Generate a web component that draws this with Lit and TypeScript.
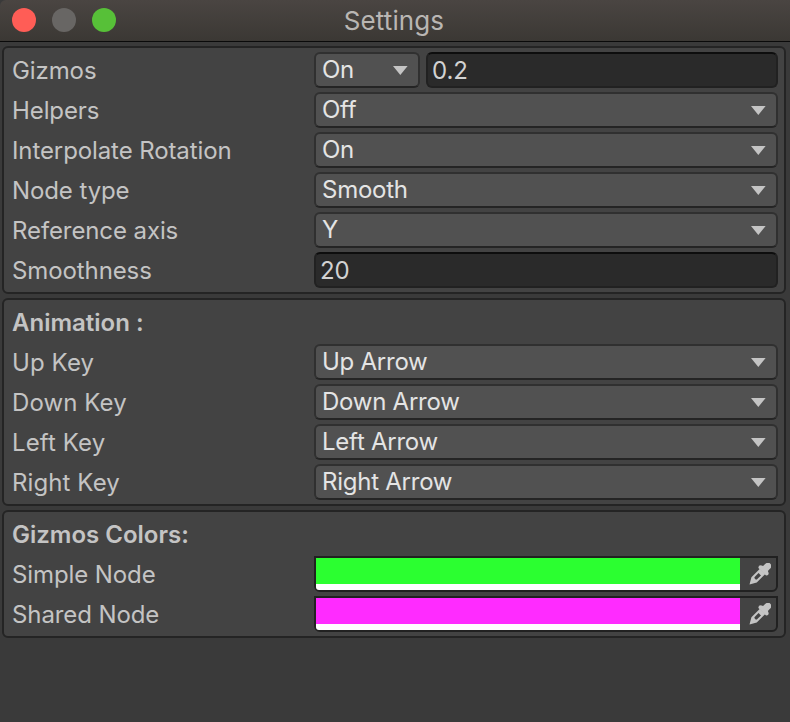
import { LitElement, html, css, svg } from "lit";
import { customElement, property } from "lit/decorators.js";
import { styleMap } from "lit/directives/style-map.js";

@customElement("popup-field")
class PopupField extends LitElement {
  @property() value = "";
  static styles = css`
    :host {
      box-sizing: border-box;
      display: flex;
      align-items: center;
      justify-content: space-between;
      height: 36px;
      padding: 0 10px 0 6px;
      border: 2px solid #303030;
      border-bottom-color: #242424;
      border-radius: 6px;
      background: #515151;
      color: #e4e4e4;
      letter-spacing: -.25px;
    }
    .value { line-height: 32px; white-space: pre; }
    .arrow { display: block; margin-top: 1px; }
  `;
  render() {
    return html`<span class="value">${this.value}</span>
      <svg class="arrow" width="15" height="9" viewBox="0 0 15 9">
        <path d="M0 0H14.6L7.3 9Z" fill="#c4c4c4" />
      </svg>`;
  }
}

@customElement("number-field")
class NumberField extends LitElement {
  @property() value = "";
  static styles = css`
    :host {
      box-sizing: border-box;
      display: block;
      height: 36px;
      padding: 0 4px;
      border: 2px solid #212121;
      border-top-color: #0d0d0d;
      border-radius: 6px;
      background: #2a2a2a;
      color: #d2d2d2;
      line-height: 33px;
      letter-spacing: -.1px;
    }
  `;
  render() {
    return html`${this.value}`;
  }
}

const eyedropper = svg`
  <g transform="translate(.5 21.5) rotate(-45)" fill="#c4c4c4">
    <path fill-rule="evenodd" d="M0 0L6.5-3.8H18.5V3.8H6.5ZM8-1.2V1.2L9 1.7H14.5V-1.7H9Z" />
    <path d="M18-5.4Q19.6-7.4 21.6-5.6L22.6-3.4H25.5Q29.4-3.4 29.4 0T25.5 3.4H22.6L21.6 5.6Q19.6 7.4 18 5.4Z" />
  </g>`;

@customElement("color-field")
class ColorField extends LitElement {
  @property() color = "";
  static styles = css`
    :host {
      box-sizing: border-box;
      display: flex;
      height: 36px;
      border: 2px solid #212121;
      border-radius: 0 0 6px 6px;
      background: #434343;
    }
    .swatch { flex: 1; box-sizing: border-box; border-bottom: 6px solid #fff; border-radius: 0 0 0 3px; }
    .picker { display: flex; align-items: center; justify-content: center; width: 36px; padding-left: 4px; box-sizing: border-box; }
  `;
  render() {
    return html`<div class="swatch" style=${styleMap({ backgroundColor: this.color })}></div>
      <div class="picker"><svg width="22" height="22" viewBox="0 0 22 22">${eyedropper}</svg></div>`;
  }
}

@customElement("app-root")
class AppRoot extends LitElement {
  static styles = css`
    :host {
      display: flex;
      flex-direction: column;
      height: 722px;
      background: #3a3a3a;
      color: #c4c4c4;
      font: 370 24px Inter, sans-serif;
      overflow: hidden;
    }
    .titlebar {
      box-sizing: border-box;
      flex: none;
      display: grid;
      grid-template-columns: 1fr auto 1fr;
      align-items: center;
      height: 42px;
      padding: 0 12px;
      border-bottom: 1px solid #0a0a0a;
      border-top-left-radius: 6px;
      background: linear-gradient(#4a4542, #3b3834);
      color: #b9b6b3;
    }
    .lights { display: flex; gap: 16px; }
    .light { width: 24px; height: 24px; border-radius: 50%; position: relative; top: -.5px; }
    .close { background: #ff5d56; }
    .minimize { background: #686664; }
    .zoom { background: #57c038; }
    .title { font-size: 26px; font-weight: 400; letter-spacing: .1px; line-height: 40px; margin-right: 2px; }
    .content { display: flex; flex-direction: column; gap: 4px; padding: 4px 4px 0 2px; }
    .panel {
      display: flex;
      flex-direction: column;
      gap: 4px;
      padding: 4px 6px 4px 8px;
      border: 2px solid #242424;
      border-radius: 6px;
      background: #434343;
    }
    .row { display: grid; grid-template-columns: 302px 1fr; height: 36px; }
    .split { display: grid; grid-template-columns: 106px 1fr; gap: 6px; }
    .label { line-height: 37px; white-space: pre; letter-spacing: -.1px; }
    .keys .label { letter-spacing: .1px; }
    .heading { height: 36px; line-height: 37px; font-weight: 600; }
  `;

  row(label: string, field: unknown) {
    return html`<div class="row"><span class="label">${label}</span>${field}</div>`;
  }
  popup(label: string, value: string) {
    return this.row(label, html`<popup-field .value=${value}></popup-field>`);
  }

  render() {
    return html`
      <header class="titlebar">
        <div class="lights">
          <i class="light close"></i><i class="light minimize"></i><i class="light zoom"></i>
        </div>
        <span class="title">Settings</span>
      </header>
      <main class="content">
        <section class="panel">
          ${this.row("Gizmos", html`<div class="split">
            <popup-field .value=${"On"}></popup-field><number-field .value=${"0.2"}></number-field>
          </div>`)}
          ${this.popup("Helpers", "Off")}
          ${this.popup("Interpolate Rotation", "On")}
          ${this.popup("Node type", "Smooth")}
          ${this.popup("Reference axis", "Y")}
          ${this.row("Smoothness", html`<number-field .value=${"20"}></number-field>`)}
        </section>
        <section class="panel keys">
          <div class="heading">Animation :</div>
          ${this.popup("Up Key", "Up Arrow")}
          ${this.popup("Down Key", "Down Arrow")}
          ${this.popup("Left Key", "Left Arrow")}
          ${this.popup("Right Key", "Right Arrow")}
        </section>
        <section class="panel">
          <div class="heading">Gizmos Colors:</div>
          ${this.row("Simple Node", html`<color-field .color=${"#2bff30"}></color-field>`)}
          ${this.row("Shared Node", html`<color-field .color=${"#ff2bff"}></color-field>`)}
        </section>
      </main>
    `;
  }
}
